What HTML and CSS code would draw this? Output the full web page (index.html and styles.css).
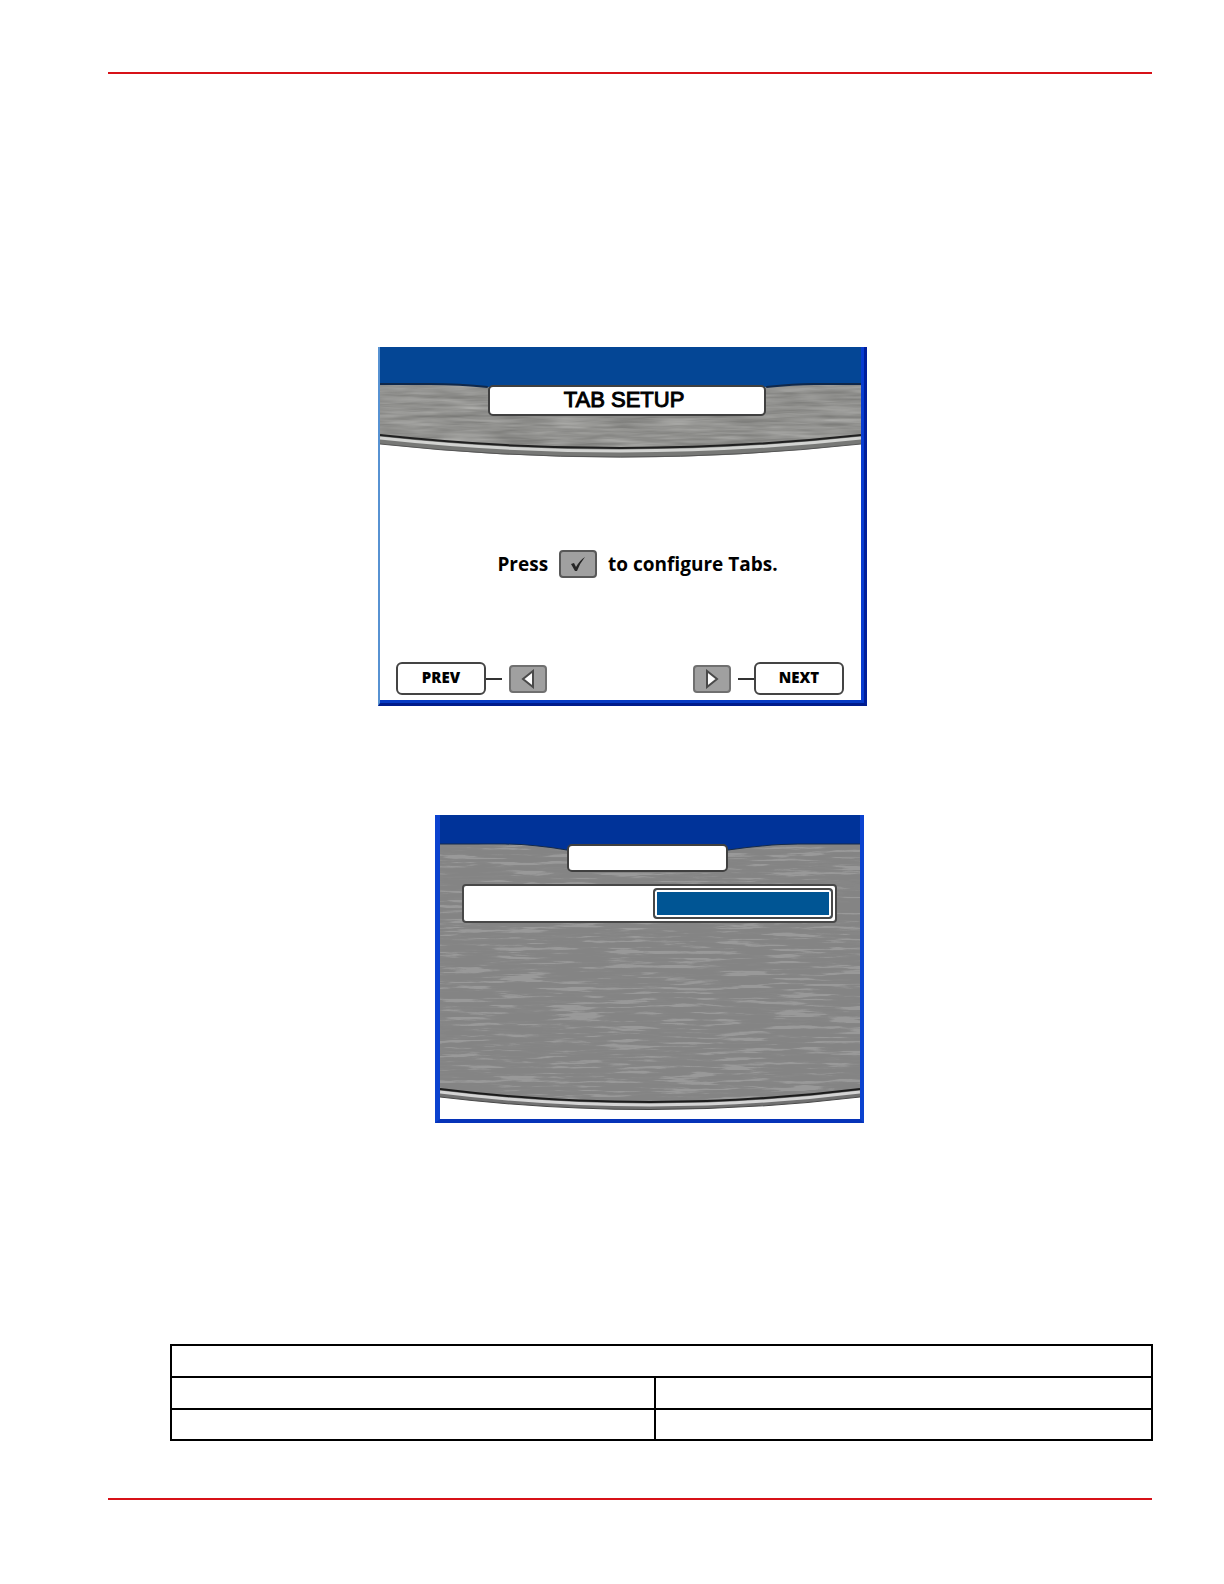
FILE: index.html
```html
<!DOCTYPE html>
<html lang="en">
<head>
    <meta charset="UTF-8">
    <meta name="viewport" content="width=device-width, initial-scale=1">
    <title>Tab Setup</title>
    <link rel="stylesheet" href="styles.css">
</head>
<body>
    <main class="page">
        <section class="screen screen-setup">
            <div class="screen-inner">
                <header class="banner">
                    <svg class="backdrop" viewBox="0 0 482 113" preserveAspectRatio="none" aria-hidden="true">
                        <defs>
                            <filter id="brushed-soft" x="0" y="0" width="100%" height="100%" color-interpolation-filters="sRGB">
                                <feTurbulence type="fractalNoise" baseFrequency="0.018 0.25" numOctaves="3" seed="4"/>
                                <feColorMatrix values="0.26 0 0 0 0.44  0.26 0 0 0 0.44  0.26 0 0 0 0.43  0 0 0 0 1"/>
                                <feComposite in2="SourceGraphic" operator="in"/>
                            </filter>
                        </defs>
                        <rect width="482" height="113" fill="#fff"/>
                        <path d="M0 36H482V88Q241 114 0 88Z" fill="#949593" filter="url(#brushed-soft)"/>
                        <path d="M0 88Q241 114 482 88V97Q241 124 0 97Z" fill="#777876"/>
                        <path d="M0 91Q241 117 482 91" fill="none" stroke="#d2d3d1" stroke-width="3"/>
                        <path d="M0 88Q241 114 482 88" fill="none" stroke="#202020" stroke-width="2"/>
                        <path d="M0 97Q241 123 482 97" fill="none" stroke="#555" stroke-width="1"/>
                        <path d="M0 0H482V37H435Q415 37 387 40H108Q80 37 50 37H0Z" fill="#044695"/>
                        <path d="M0 37H50Q80 37 108 40M387 40Q415 37 435 37H482" fill="none" stroke="#10284a" stroke-width="2"/>
                    </svg>
                    <h1 class="title">TAB SETUP</h1>
                </header>
                <p class="prompt">
                    <span>Press</span>
                    <button class="key" type="button" aria-label="Confirm">
                        <svg width="18" height="18" viewBox="0 0 18 18" aria-hidden="true">
                            <path d="M2 9L5 8L7 12Q11 5 16 2Q11 8 8 16H6Z" fill="#252525"/>
                        </svg>
                    </button>
                    <span>to configure Tabs.</span>
                </p>
                <nav class="controls">
                    <div class="control">
                        <button class="nav-button" type="button">PREV</button>
                        <span class="lead"></span>
                        <button class="key" type="button" aria-label="Left">
                            <svg width="18" height="20" viewBox="0 0 18 20" aria-hidden="true">
                                <path d="M14 2V18L4 10Z" fill="#fff" stroke="#4a4a4a" stroke-width="2"/>
                            </svg>
                        </button>
                    </div>
                    <div class="control">
                        <button class="key" type="button" aria-label="Right">
                            <svg width="18" height="20" viewBox="0 0 18 20" aria-hidden="true">
                                <path d="M4 2V18L14 10Z" fill="#fff" stroke="#4a4a4a" stroke-width="2"/>
                            </svg>
                        </button>
                        <span class="lead"></span>
                        <button class="nav-button" type="button">NEXT</button>
                    </div>
                </nav>
            </div>
        </section>

        <section class="screen screen-tabs">
            <svg class="backdrop" viewBox="0 0 420 303" preserveAspectRatio="none" aria-hidden="true">
                <defs>
                    <filter id="brushed" x="0" y="0" width="100%" height="100%" color-interpolation-filters="sRGB">
                        <feTurbulence type="fractalNoise" baseFrequency="0.018 0.28" numOctaves="4" seed="9"/>
                        <feColorMatrix values="1 0 0 0 0  1 0 0 0 0  1 0 0 0 0  0 0 0 0 1"/>
                        <feComponentTransfer>
                            <feFuncR type="table" tableValues="0.52 0.52 0.52 0.52 0.52 0.53 0.6 0.6 0.6 0.6"/>
                            <feFuncG type="table" tableValues="0.52 0.52 0.52 0.52 0.52 0.53 0.6 0.6 0.6 0.6"/>
                            <feFuncB type="table" tableValues="0.52 0.52 0.52 0.52 0.52 0.53 0.6 0.6 0.6 0.6"/>
                        </feComponentTransfer>
                        <feComposite in2="SourceGraphic" operator="in"/>
                    </filter>
                </defs>
                <rect width="420" height="303" fill="#fff"/>
                <path d="M0 28H420V273Q210 299 0 273Z" fill="#858585" filter="url(#brushed)"/>
                <path d="M0 273Q210 299 420 273V281Q210 306 0 281Z" fill="#717171"/>
                <path d="M0 276Q210 302 420 276" fill="none" stroke="#d4d4d4" stroke-width="3"/>
                <path d="M0 273Q210 299 420 273" fill="none" stroke="#1c1c1c" stroke-width="2"/>
                <path d="M0 281Q210 306 420 281" fill="none" stroke="#4a4a4a" stroke-width="1"/>
                <path d="M0 0H420V29H358Q330 29 288 35H127Q92 29 65 29H0Z" fill="#003399"/>
                <path d="M0 29H65Q92 29 127 35M288 35Q330 29 358 29H420" fill="none" stroke="#162b4a" stroke-width="1"/>
            </svg>
            <div class="tabs-content">
                <div class="title title-empty"></div>
                <div class="setting">
                    <input class="setting-value" type="text" aria-label="Tab">
                </div>
            </div>
        </section>

        <table class="settings-table">
            <colgroup>
                <col class="name">
                <col>
            </colgroup>
            <tbody>
                <tr><th colspan="2"></th></tr>
                <tr><td></td><td></td></tr>
                <tr><td></td><td></td></tr>
            </tbody>
        </table>
    </main>
</body>
</html>
```

FILE: styles.css
```css
* {
    box-sizing: border-box;
}
body {
    margin: 0;
    background-color: #fff;
    color: #000;
    font-family: 'Open Sans', 'Noto Sans', sans-serif;
}
.page {
    margin: 72px 72px 0 108px;
    padding-bottom: 57px;
    border-top: 2px solid #d71118;
    border-bottom: 2px solid #d71118;
}
.screen {
    width: 100%;
}
.screen-setup {
    max-width: 489px;
    margin: 273px 0 0 270px;
    border-left: 2px solid #5792d2;
    border-right: 3px solid #001f9a;
    border-bottom: 3px solid #001c8c;
}
.screen-inner {
    border-right: 3px solid #073bd0;
    border-bottom: 3px solid #073bc4;
}
.banner, .screen-tabs {
    display: grid;
}
.backdrop {
    grid-area: 1 / 1;
    display: block;
    width: 100%;
    height: 100%;
}
.banner {
    height: 113px;
}
.title {
    grid-area: 1 / 1;
    background-color: #fff;
    border: 2px solid #404040;
    border-radius: 5px;
    z-index: 1;
}
.banner .title {
    height: 31px;
    margin: 38px 95px 0 108px;
    padding-right: 6px;
    font-family: 'Liberation Sans', sans-serif;
    font-size: 22px;
    font-weight: 400;
    line-height: 26px;
    text-align: center;
    -webkit-text-stroke: 1px #000;
}
.prompt {
    display: flex;
    align-items: center;
    justify-content: center;
    gap: 11px;
    margin: 90px 0 84px 34px;
    font-size: 19px;
    font-weight: 700;
    line-height: 28px;
}
.key {
    display: flex;
    align-items: center;
    justify-content: center;
    width: 38px;
    height: 28px;
    padding: 0;
    background-color: #a0a0a0;
    border: 2px solid #707070;
    border-radius: 4px;
}
.prompt .key {
    border-color: #585858;
}
.controls {
    display: flex;
    justify-content: space-between;
    padding: 0 17px 5px 16px;
}
.control {
    display: flex;
    align-items: center;
}
.nav-button {
    width: 90px;
    height: 33px;
    padding: 0 0 4px;
    background-color: #fff;
    border: 2px solid #444;
    border-radius: 6px;
    color: #000;
    font-family: inherit;
    font-size: 15px;
    font-weight: 800;
}
.lead {
    width: 16px;
    height: 2px;
    background-color: #333;
}
.lead + .key {
    margin-left: 7px;
}
.key + .lead {
    margin-left: 7px;
}
.screen-tabs {
    max-width: 429px;
    height: 308px;
    margin: 109px 0 221px 327px;
    border: solid #0b42cf;
    border-width: 0 4px 4px 5px;
    border-bottom-color: #0633b8;
}
.tabs-content {
    grid-area: 1 / 1;
    z-index: 1;
    padding: 29px 23px 0 22px;
}
.title-empty {
    height: 28px;
    margin: 0 109px 0 105px;
}
.setting {
    display: flex;
    justify-content: flex-end;
    height: 39px;
    margin-top: 12px;
    padding: 2px;
    background-color: #fff;
    border: 2px solid #484848;
    border-radius: 4px;
}
.setting-value {
    width: 49%;
    padding: 0 8px;
    background-color: #005594;
    border: 2px solid #484848;
    border-radius: 4px;
    box-shadow: inset 0 0 0 2px #fff;
    color: #fff;
}
.settings-table {
    width: calc(100% - 61px);
    margin-left: 62px;
    border-collapse: collapse;
    table-layout: fixed;
}
.settings-table th, .settings-table td {
    height: 32px;
    padding: 0;
    border: 2px solid #000;
}
.settings-table tr:last-child td {
    height: 31px;
}
.settings-table .name {
    width: 484px;
}
```
